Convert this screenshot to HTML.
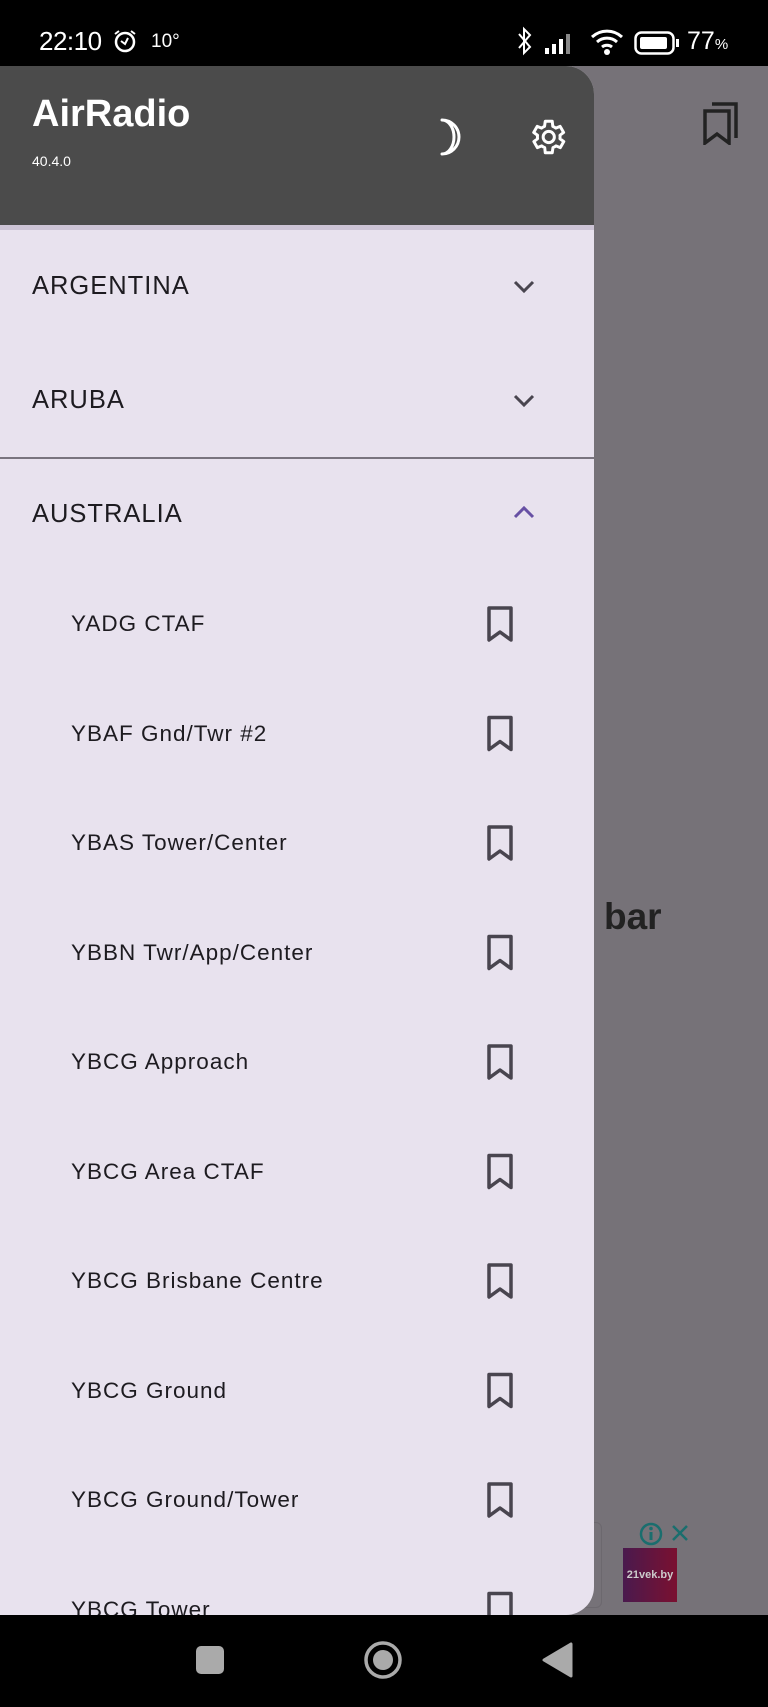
<!DOCTYPE html>
<html><head><meta charset="utf-8"><style>
*{margin:0;padding:0;box-sizing:border-box}
body{width:768px;height:1707px;position:relative;overflow:hidden;background:#767278;font-family:"Liberation Sans",sans-serif}
.sb{position:absolute;left:0;top:0;width:768px;height:66px;background:#000;color:#fff}
.nav{position:absolute;left:0;top:1615px;width:768px;height:92px;background:#000}
.drawer{position:absolute;left:0;top:66px;width:594px;height:1549px;background:#e8e2ee;border-radius:0 28px 28px 0;overflow:hidden}
.hdr{position:absolute;left:0;top:0;width:594px;height:159px;background:#4b4b4b}
.band{position:absolute;left:0;top:159px;width:594px;height:5px;background:#cdc4d6}
.t{position:absolute;color:#1d1b20;letter-spacing:1px;white-space:nowrap}
.cat{font-size:25.5px;left:32px}
.it{font-size:22.5px;left:71px}
svg{position:absolute}
</style></head><body>
<div class="sb">
<div style="position:absolute;left:39px;top:26px;font-size:26px;letter-spacing:-0.5px">22:10</div>
<svg style="left:112px;top:28px" width="26" height="26" viewBox="0 0 26 26"><circle cx="13" cy="14" r="9" fill="none" stroke="#fff" stroke-width="2.5"/><path d="M9 13l4 3 3-6" fill="none" stroke="#fff" stroke-width="2"/><path d="M3 6l4-3M23 6l-4-3" stroke="#fff" stroke-width="2"/></svg>
<div style="position:absolute;left:151px;top:31px;font-size:19px">10°</div>
<svg style="left:515px;top:26px" width="20" height="30" viewBox="0 0 20 30"><path d="M4 8l11 13-6 6V3l6 6L4 22" fill="none" stroke="#fff" stroke-width="2"/></svg>
<svg style="left:545px;top:32px" width="36" height="22"><rect x="0" y="16" width="4" height="6" fill="#fff"/><rect x="7" y="12" width="4" height="10" fill="#fff"/><rect x="14" y="7" width="4" height="15" fill="#fff"/><rect x="21" y="2" width="4" height="20" fill="#888"/></svg>
<svg style="left:590px;top:28px" width="36" height="28" viewBox="0 0 36 28"><path d="M2 9a22 22 0 0 1 30 0M7 14a15 15 0 0 1 20 0M12 19a8 8 0 0 1 10 0" fill="none" stroke="#fff" stroke-width="3"/><circle cx="17" cy="24" r="3" fill="#fff"/></svg>
<svg style="left:634px;top:31px" width="48" height="24"><rect x="1.5" y="1.5" width="38" height="21" rx="6" fill="none" stroke="#fff" stroke-width="2.5"/><rect x="6" y="6" width="27" height="12" rx="2" fill="#fff"/><rect x="42" y="8" width="3" height="8" fill="#fff"/></svg>
<div style="position:absolute;left:687px;top:27px;font-size:25px">77<span style="font-size:15px">%</span></div>
</div>
<svg style="left:702px;top:99px" width="38" height="46" viewBox="0 0 38 46"><path d="M3 12h24v32l-12-9-12 9z" fill="none" stroke="#222" stroke-width="3.5"/><path d="M10 5h24v34" fill="none" stroke="#222" stroke-width="3.5"/></svg>
<div style="position:absolute;left:604px;top:896px;font-size:37px;font-weight:bold;color:#222">bar</div>
<div style="position:absolute;left:560px;top:1522px;width:42px;height:86px;border:1px solid #6c686e;border-radius:6px"></div>
<svg style="left:639px;top:1522px" width="54" height="24"><circle cx="12" cy="12" r="10" fill="none" stroke="#1a6e6e" stroke-width="2.5"/><rect x="10.5" y="10" width="3" height="8" fill="#1a6e6e"/><circle cx="12" cy="6.5" r="1.8" fill="#1a6e6e"/><path d="M34 4l14 14M48 4L34 18" stroke="#1a6e6e" stroke-width="2.5"/></svg>
<div style="position:absolute;left:623px;top:1548px;width:54px;height:54px;background:linear-gradient(90deg,#4a1a4e,#7a1030);color:#ccc;font-size:11px;font-weight:bold;line-height:54px;text-align:center">21vek.by</div>
<div class="drawer">
<div class="hdr">
<div style="position:absolute;left:32px;top:27px;font-size:38px;font-weight:bold;color:#fff">AirRadio</div>
<div style="position:absolute;left:32px;top:87px;font-size:14px;color:#fff">40.4.0</div>
<svg style="left:436px;top:51px" width="36" height="40" viewBox="0 0 36 40"><path d="M6 3a17 17 0 0 1 0 34a12 17 0 0 0 0-34z" fill="none" stroke="#fff" stroke-width="3" stroke-linejoin="round"/></svg>
<svg style="left:526px;top:50px" width="42" height="42" viewBox="0 0 24 24"><path d="M19.4 13a7.5 7.5 0 0 0 0-2l2.1-1.6-2-3.5-2.5 1a7.3 7.3 0 0 0-1.7-1L15 3h-4l-.4 2.9a7.3 7.3 0 0 0-1.7 1l-2.5-1-2 3.5L6.6 11a7.5 7.5 0 0 0 0 2l-2.1 1.6 2 3.5 2.5-1a7.3 7.3 0 0 0 1.7 1L11 21h4l.4-2.9a7.3 7.3 0 0 0 1.7-1l2.5 1 2-3.5z" fill="none" stroke="#fff" stroke-width="1.7" stroke-linejoin="round"/><circle cx="13" cy="12" r="3.2" fill="none" stroke="#fff" stroke-width="1.7"/></svg>
</div>
<div class="band"></div>
<div class="t cat" style="top:206px">ARGENTINA</div>
<svg style="left:512px;top:213px" width="24" height="16"><path d="M3 3l9 9 9-9" fill="none" stroke="#49454f" stroke-width="3"/></svg>
<div class="t cat" style="top:320px">ARUBA</div>
<svg style="left:512px;top:327px" width="24" height="16"><path d="M3 3l9 9 9-9" fill="none" stroke="#49454f" stroke-width="3"/></svg>
<div style="position:absolute;left:0;top:391px;width:594px;height:2px;background:#79747e"></div>
<div class="t cat" style="top:434px">AUSTRALIA</div>
<svg style="left:512px;top:438px" width="24" height="16"><path d="M3 13l9-9 9 9" fill="none" stroke="#6750a4" stroke-width="3"/></svg>
<div class="t it" style="top:545px">YADG CTAF</div>
<div class="t it" style="top:655px">YBAF Gnd/Twr #2</div>
<div class="t it" style="top:764px">YBAS Tower/Center</div>
<div class="t it" style="top:874px">YBBN Twr/App/Center</div>
<div class="t it" style="top:983px">YBCG Approach</div>
<div class="t it" style="top:1093px">YBCG Area CTAF</div>
<div class="t it" style="top:1202px">YBCG Brisbane Centre</div>
<div class="t it" style="top:1312px">YBCG Ground</div>
<div class="t it" style="top:1421px">YBCG Ground/Tower</div>
<div class="t it" style="top:1531px">YBCG Tower</div>
<svg style="left:486px;top:540px" width="28" height="1100"><defs><path id="b" d="M3 2h22v32l-11-8-11 8z" fill="none" stroke="#49454f" stroke-width="3.5" stroke-linejoin="round"/></defs>
<use href="#b"/><use href="#b" y="109.5"/><use href="#b" y="219"/><use href="#b" y="328.5"/><use href="#b" y="438"/><use href="#b" y="547.5"/><use href="#b" y="657"/><use href="#b" y="766.5"/><use href="#b" y="876"/><use href="#b" y="985.5"/></svg>
</div>
<div class="nav">
<div style="position:absolute;left:196px;top:31px;width:28px;height:28px;background:#aaa;border-radius:5px"></div>
<svg style="left:363px;top:25px" width="40" height="40"><circle cx="20" cy="20" r="17" fill="none" stroke="#aaa" stroke-width="3.5"/><circle cx="20" cy="20" r="10" fill="#aaa"/></svg>
<svg style="left:541px;top:27px" width="32" height="36"><path d="M30 2v32L3 18z" fill="#aaa" stroke="#aaa" stroke-width="3" stroke-linejoin="round"/></svg>
</div>
</body></html>
